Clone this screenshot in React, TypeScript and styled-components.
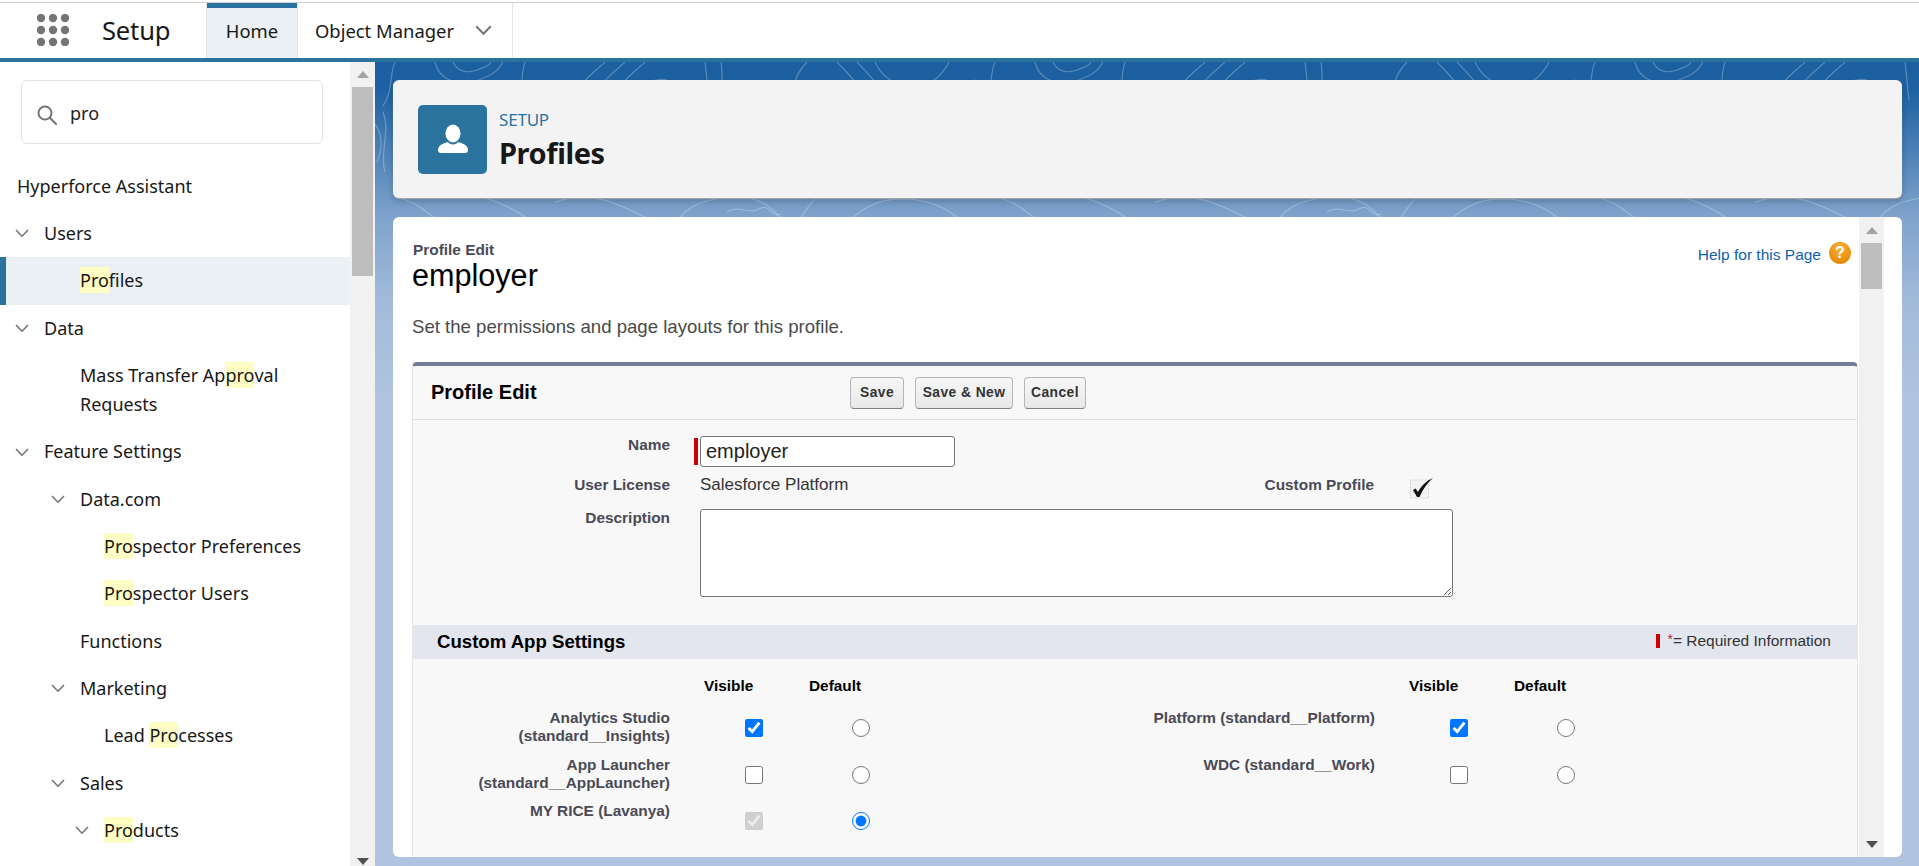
import React from "react";
import styled, { createGlobalStyle } from "styled-components";

const UI = `"Noto Sans", "Open Sans", sans-serif`;
const ARIAL = `"Liberation Sans", Arial, sans-serif`;
const BRAND = "#2a739e";

const Global = createGlobalStyle`
  html, body { margin: 0; padding: 0; height: 100%; overflow: hidden; background: #fff; }
  * { box-sizing: border-box; }
`;

const Page = styled.div`
  height: 100vh;
  display: flex;
  flex-direction: column;
  overflow: hidden;
  font-family: ${UI};
  color: #181818;
`;

const Header = styled.header`
  height: 62px;
  flex: none;
  padding-top: 2px;
  border-bottom: 4px solid ${BRAND};
  background: #fff;
`;
const HeaderInner = styled.div`
  height: 100%;
  border-top: 1px solid #cfcfcf;
  display: flex;
  align-items: stretch;
`;
const Launcher = styled.div`
  width: 102px;
  padding: 11px 0 0 37px;
  svg { display: block; }
`;
const AppName = styled.div`
  width: 104px;
  font-size: 25.6px;
  line-height: 55px;
  color: #181818;
  letter-spacing: -0.2px;
`;
const Tab = styled.div<{ $active?: boolean }>`
  display: flex;
  align-items: center;
  justify-content: ${(p) => (p.$active ? "center" : "flex-start")};
  gap: 21px;
  width: ${(p) => (p.$active ? "92px" : "215px")};
  padding-left: ${(p) => (p.$active ? "0" : "17px")};
  font-size: 18.4px;
  border-right: 1px solid #e4e4e4;
  border-left: ${(p) => (p.$active ? "1px solid #e4e4e4" : "none")};
  background: ${(p) => (p.$active ? "#eaf0f4" : "#fff")};
  box-shadow: ${(p) => (p.$active ? `inset 0 5px 0 ${BRAND}` : "none")};
`;

const Workspace = styled.div`
  flex: 1;
  min-height: 0;
  display: flex;
`;

const Sidebar = styled.aside`
  width: 375px;
  flex: none;
  display: flex;
  background: #fff;
`;
const SideMain = styled.div`
  width: 350px;
  flex: none;
  overflow: hidden;
`;
const SearchBox = styled.div`
  margin: 18px 0 0 21px;
  width: 302px;
  height: 64px;
  border: 1px solid #e5e5e5;
  border-radius: 6px;
  display: flex;
  align-items: center;
  gap: 13px;
  padding: 2px 0 0 15px;
  font-size: 18px;
  color: #222;
  svg { margin-top: 3px; }
`;
const NavList = styled.div`
  margin-top: 18.6px;
`;
const NavRow = styled.div<{ $pad: number; $active?: boolean }>`
  display: flex;
  align-items: center;
  min-height: 47.33px;
  padding: 9.16px 20px 9.16px ${(p) => p.$pad}px;
  font-size: 18px;
  line-height: 29px;
  color: #181818;
  background: ${(p) => (p.$active ? "#eaf0f4" : "transparent")};
  box-shadow: ${(p) => (p.$active ? `inset 6px 0 0 ${BRAND}` : "none")};
`;
const NavChevron = styled.span`
  width: 14px;
  flex: none;
  margin-right: 15px;
  display: flex;
`;
const Mark = styled.span`
  display: inline-block;
  line-height: 26px;
  vertical-align: top;
  margin-top: 1px;
  background: #fdfdc4;
`;

const Track = styled.div`
  width: 25px;
  flex: none;
  background: #f1f1f1;
  padding: 0 2px 0 2px;
  display: flex;
  flex-direction: column;
  align-items: stretch;
`;
const ArrowSlot = styled.div<{ $down?: boolean; $h: number }>`
  height: ${(p) => p.$h}px;
  flex: none;
  margin-top: ${(p) => (p.$down ? "auto" : "0")};
  display: flex;
  justify-content: center;
  align-items: center;
  svg { display: block; }
`;
const Thumb = styled.div<{ $h: number }>`
  height: ${(p) => p.$h}px;
  flex: none;
  background: #bdbdbd;
`;

const Main = styled.main`
  flex: 1;
  min-width: 0;
  position: relative;
  padding: 18px 17px 9px 18px;
  display: flex;
  flex-direction: column;
  gap: 19px;
  background: linear-gradient(180deg, #1c5fa1 0, #1f62a3 30px, #7fa3cc 155px, #a3bbda 240px, #b0c4df 340px, #b0c4df 100%);
`;
const Contours = styled.svg`
  position: absolute;
  inset: 0;
  width: 100%;
  height: 100%;
  pointer-events: none;
`;
const TitleCard = styled.section`
  position: relative;
  height: 118px;
  flex: none;
  border-radius: 6px;
  background: #f3f3f3;
  box-shadow: 0 1px 1px #a8a8a8, 0 3px 6px rgba(0, 0, 0, 0.22);
  display: flex;
  align-items: center;
  padding-left: 25px;
  gap: 12px;
`;
const TitleIcon = styled.div`
  width: 69px;
  height: 69px;
  border-radius: 5px;
  background: ${BRAND};
  display: flex;
  align-items: center;
  justify-content: center;
`;
const TitleText = styled.div`
  display: flex;
  flex-direction: column;
`;
const Eyebrow = styled.div`
  font-size: 17px;
  line-height: 24px;
  color: ${BRAND};
  letter-spacing: -0.2px;
`;
const BigTitle = styled.h1`
  margin: 4px 0 0;
  font-size: 29px;
  line-height: 34px;
  font-weight: 700;
  color: #181818;
  letter-spacing: -0.4px;
`;

const ContentCard = styled.section`
  position: relative;
  flex: 1;
  min-height: 0;
  border-radius: 6px;
  background: #fff;
  display: flex;
  padding-right: 18px;
  overflow: hidden;
`;
const Body = styled.div`
  flex: 1;
  min-width: 0;
  padding: 25px 1px 0 19px;
  overflow: hidden;
  font-family: ${ARIAL};
`;
const PageHead = styled.div`
  display: flex;
  justify-content: space-between;
  align-items: flex-start;
`;
const PageKicker = styled.div`
  padding-left: 1px;
  font-size: 15.4px;
  line-height: 16px;
  font-weight: 700;
  color: #4a4a56;
`;
const PageName = styled.h2`
  margin: 0;
  font-size: 30.6px;
  line-height: 34px;
  font-weight: 400;
  color: #000;
`;
const HelpLink = styled.a`
  display: flex;
  align-items: center;
  gap: 8px;
  margin: 0 7px 0 0;
  font-size: 15.5px;
  color: #0f62ae;
`;
const HelpText = styled.span`
  padding-top: 4px;
`;
const HelpBadge = styled.span`
  width: 22px;
  height: 22px;
  border-radius: 50%;
  background: radial-gradient(circle at 50% 30%, #f8b23e, #e58a08 75%);
  color: #fff;
  font-weight: 700;
  font-size: 16px;
  line-height: 22px;
  text-align: center;
`;
const Lead = styled.p`
  margin: 25px 0 0;
  font-size: 18.6px;
  line-height: 20px;
  color: #4a4a4a;
`;

const Panel = styled.div`
  margin-top: 25px;
  border: 1px solid #e4e6e8;
  border-top: 4px solid #747e96;
  border-radius: 5px 5px 0 0;
  background: #f8f8f8;
  height: 600px;
`;
const PanelHead = styled.div`
  height: 54px;
  border-bottom: 1px solid #dfe1e3;
  display: flex;
  align-items: center;
  padding-left: 18px;
`;
const PanelTitle = styled.h3`
  margin: 0;
  width: 419px;
  font-size: 20px;
  font-weight: 700;
  color: #000;
`;
const Buttons = styled.div`
  display: flex;
  gap: 11px;
`;
const Btn = styled.button<{ $w: number }>`
  width: ${(p) => p.$w}px;
  height: 32px;
  padding: 0;
  border: 1px solid #b5b5b5;
  border-bottom-color: #7f7f7f;
  border-radius: 4px;
  background: linear-gradient(180deg, #f7f7f7, #e8e8e9);
  font-family: ${ARIAL};
  font-size: 13.8px;
  font-weight: 700;
  letter-spacing: 0.45px;
  color: #333;
`;
const FormRow = styled.div<{ $mt: number }>`
  display: grid;
  grid-template-columns: 257px 1fr;
  column-gap: 30px;
  margin-top: ${(p) => p.$mt}px;
`;
const FieldLabel = styled.div<{ $pt?: number }>`
  text-align: right;
  font-size: 15.4px;
  line-height: 16px;
  font-weight: 700;
  color: #4a4a56;
  padding-top: ${(p) => p.$pt ?? 0}px;
`;
const FieldCell = styled.div`
  display: flex;
  align-items: flex-start;
  position: relative;
`;
const Required = styled.span`
  position: absolute;
  left: -6px;
  top: 2px;
  width: 4px;
  height: 27px;
  background: #c00;
`;
const NameInput = styled.input`
  width: 255px;
  height: 31px;
  border: 1px solid #767676;
  border-radius: 3px;
  background: #fff;
  padding: 0 5px;
  font-family: ${ARIAL};
  font-size: 20px;
  color: #222;
  outline: none;
`;
const ValueText = styled.div`
  width: 434px;
  font-size: 17px;
  line-height: 18px;
  color: #333;
`;
const InlineLabel = styled(FieldLabel)`
  width: 240px;
`;
const ReadonlyCheck = styled.svg`
  display: block;
  margin: 1px 0 0 36px;
`;
const Notes = styled.textarea`
  display: block;
  width: 753px;
  height: 88px;
  margin: 0;
  border: 1px solid #767676;
  border-radius: 3px;
  background: #fff;
  outline: none;
`;
const SectionBar = styled.div`
  margin-top: 28px;
  height: 34px;
  background: #e3e6ef;
  display: flex;
  align-items: center;
  justify-content: space-between;
  padding: 0 26px 0 24px;
`;
const SectionTitle = styled.h4`
  margin: 0;
  font-size: 18.6px;
  font-weight: 700;
  color: #000;
`;
const RequiredNote = styled.div`
  display: flex;
  align-items: center;
  font-size: 15.5px;
  line-height: 18px;
  color: #333;
  margin-top: -3px;
  i {
    display: block;
    width: 4px;
    height: 14px;
    background: #c00;
    margin-right: 7px;
  }
  b {
    font-weight: 400;
    color: #a33;
    font-size: 14px;
    line-height: 14px;
    align-self: flex-start;
  }
`;
const AppTable = styled.div`
  display: flex;
  padding-top: 18px;
`;
const AppHalf = styled.div`
  width: 705px;
  display: grid;
  grid-template-columns: 291px 105px 1fr;
  grid-auto-rows: 46.5px;
  grid-template-rows: 32px;
`;
const ColHead = styled.div`
  font-size: 15.4px;
  line-height: 18px;
  font-weight: 700;
  color: #000;
`;
const AppLabel = styled.div`
  padding-right: 34px;
  text-align: right;
  font-size: 15.4px;
  line-height: 18px;
  font-weight: 700;
  color: #4a4a56;
`;
const Cell = styled.div<{ $ml: number }>`
  padding: 10px 0 0 ${(p) => p.$ml}px;
  input {
    display: block;
    width: 18px;
    height: 18px;
    margin: 0;
  }
`;

const Chev = ({ size = 14 }: { size?: number }) => (
  <svg width={size} height={size * 0.6} viewBox="0 0 14 8.4" fill="none" stroke="#747474" strokeWidth="1.6">
    <polyline points="1,1 7,7.2 13,1" />
  </svg>
);

const ScrollBar = ({ h, upH, downH }: { h: number; upH: number; downH: number }) => (
  <Track>
    <ArrowSlot $h={upH}>
      <svg width="12" height="7"><polygon points="6,0 12,7 0,7" fill="#a3a3a3" /></svg>
    </ArrowSlot>
    <Thumb $h={h} />
    <ArrowSlot $down $h={downH}>
      <svg width="12" height="7"><polygon points="0,0 12,0 6,7" fill="#505050" /></svg>
    </ArrowSlot>
  </Track>
);

const Hl = ({ pre = "", hl, post = "" }: { pre?: string; hl: string; post?: string }) => (
  <span>
    {pre}
    <Mark>{hl}</Mark>
    {post}
  </span>
);

type Item = { pad: number; chev?: boolean; active?: boolean; node: React.ReactNode };
const items: Item[] = [
  { pad: 17, node: "Hyperforce Assistant" },
  { pad: 15, chev: true, node: "Users" },
  { pad: 80, active: true, node: <Hl hl="Pro" post="files" /> },
  { pad: 15, chev: true, node: "Data" },
  { pad: 80, node: <Hl pre="Mass Transfer Ap" hl="pro" post="val Requests" /> },
  { pad: 15, chev: true, node: "Feature Settings" },
  { pad: 51, chev: true, node: "Data.com" },
  { pad: 104, node: <Hl hl="Pro" post="spector Preferences" /> },
  { pad: 104, node: <Hl hl="Pro" post="spector Users" /> },
  { pad: 80, node: "Functions" },
  { pad: 51, chev: true, node: "Marketing" },
  { pad: 104, node: <Hl pre="Lead " hl="Pro" post="cesses" /> },
  { pad: 51, chev: true, node: "Sales" },
  { pad: 75, chev: true, node: <Hl hl="Pro" post="ducts" /> },
];

const leftApps = [
  { label: "Analytics Studio (standard__Insights)", vis: "on", def: false },
  { label: "App Launcher (standard__AppLauncher)", vis: "off", def: false },
  { label: "MY RICE (Lavanya)", vis: "locked", def: true },
];
const rightApps = [
  { label: "Platform (standard__Platform)", vis: "on", def: false },
  { label: "WDC (standard__Work)", vis: "off", def: false },
];

const AppColumn = ({ name, rows }: { name: string; rows: { label: string; vis: string; def: boolean }[] }) => (
  <AppHalf>
    <div />
    <ColHead>Visible</ColHead>
    <ColHead>Default</ColHead>
    {rows.map((r) => (
      <React.Fragment key={r.label}>
        <AppLabel>{r.label.includes("(") && r.label.length > 32 ? (
          <>
            {r.label.split(" (")[0]}
            <br />({r.label.split(" (")[1]}
          </>
        ) : (
          r.label
        )}</AppLabel>
        <Cell $ml={41}>
          <input type="checkbox" readOnly checked={r.vis !== "off"} disabled={r.vis === "locked"} />
        </Cell>
        <Cell $ml={43}>
          <input type="radio" name={name} readOnly checked={r.def} />
        </Cell>
      </React.Fragment>
    ))}
  </AppHalf>
);

const contourTile = [
  "M20 0c-6 14-2 30-12 44",
  "M60 0c4 18 24 26 44 18s20-12 24-18",
  "M78 0c4 9 14 12 24 8s12-4 14-8",
  "M150 0c-4 14-4 24 0 38",
  "M190 40c12-14 26-28 40-40",
  "M210 40c12-14 26-28 40-40",
  "M230 40c12-14 26-28 40-40",
  "M262 30c14-16 30-16 44-4s6 20 10 34",
  "M330 0c2 14 2 24 4 38",
  "M346 0c2 14 0 26 4 38",
  "M420 40c-4-16 2-30 12-40",
  "M462 0c14 14 24 28 36 38",
  "M482 0c14 14 24 28 36 38",
  "M500 0c10 22 40 34 62 16 6-6 10-12 12-16",
  "M590 38c8-12 12-26 16-38",
  "M20 135c30 6 40 26 60 36",
  "M70 136c34-10 70 10 96 30",
  "M180 140c40-14 70 6 100 20",
  "M300 165c6-16 20-26 52-30s50 14 60 30",
  "M352 150c14-8 20 4 34-4 8-4 10 10 20 6",
  "M440 136c-8 12-18 20-14 30",
  "M470 165c10-14 30-30 62-28s46 14 62 28",
  "M8 50c8 20-4 40 2 60",
  "M-2 60c10 10 10 26 4 40",
];

export default function App() {
  return (
    <Page>
      <Global />
      <Header>
        <HeaderInner>
          <Launcher>
            <svg width="32" height="32" viewBox="0 0 32 32" fill="#747474">
              {[4, 16, 28].flatMap((y) => [4, 16, 28].map((x) => <circle key={`${x}-${y}`} cx={x} cy={y} r="4.2" />))}
            </svg>
          </Launcher>
          <AppName>Setup</AppName>
          <Tab $active>Home</Tab>
          <Tab>
            Object Manager
            <Chev size={17} />
          </Tab>
        </HeaderInner>
      </Header>
      <Workspace>
        <Sidebar>
          <SideMain>
            <SearchBox>
              <svg width="20" height="20" viewBox="0 0 20 20" fill="none" stroke="#747474" strokeWidth="2">
                <circle cx="8" cy="8" r="6.5" />
                <line x1="12.8" y1="12.8" x2="19" y2="19" strokeLinecap="round" />
              </svg>
              pro
            </SearchBox>
            <NavList>
              {items.map((it, i) => (
                <NavRow key={i} $pad={it.pad} $active={it.active}>
                  {it.chev && (
                    <NavChevron>
                      <Chev />
                    </NavChevron>
                  )}
                  {it.node}
                </NavRow>
              ))}
            </NavList>
          </SideMain>
          <ScrollBar h={189} upH={25} downH={10} />
        </Sidebar>
        <Main>
          <Contours>
            <defs>
              <pattern id="topo" width="600" height="170" patternUnits="userSpaceOnUse" x="0" y="0">
                {contourTile.map((d, i) => (
                  <path key={i} d={d} fill="none" stroke="#ffffff" strokeOpacity="0.26" strokeWidth="1.2" />
                ))}
              </pattern>
            </defs>
            <rect width="100%" height="170" fill="url(#topo)" />
          </Contours>
          <TitleCard>
            <TitleIcon>
              <svg width="30" height="30" viewBox="0 0 30 30" fill="#fff">
                <ellipse cx="15" cy="9.5" rx="7.5" ry="9" />
                <path d="M0 26c0-5 6-7 10-8 1 1.500 3 2.500 5 2.500s4-1 5-2.500c4 1 10 3 10 8 0 2-1 3-3 3H3c-2 0-3-1-3-3z" />
              </svg>
            </TitleIcon>
            <TitleText>
              <Eyebrow>SETUP</Eyebrow>
              <BigTitle>Profiles</BigTitle>
            </TitleText>
          </TitleCard>
          <ContentCard>
            <Body>
              <PageHead>
                <div>
                  <PageKicker>Profile Edit</PageKicker>
                  <PageName>employer</PageName>
                </div>
                <HelpLink>
                  <HelpText>Help for this Page</HelpText>
                  <HelpBadge>?</HelpBadge>
                </HelpLink>
              </PageHead>
              <Lead>Set the permissions and page layouts for this profile.</Lead>
              <Panel>
                <PanelHead>
                  <PanelTitle>Profile Edit</PanelTitle>
                  <Buttons>
                    <Btn $w={54}>Save</Btn>
                    <Btn $w={98}>Save &amp; New</Btn>
                    <Btn $w={62}>Cancel</Btn>
                  </Buttons>
                </PanelHead>
                <FormRow $mt={16}>
                  <FieldLabel $pt={1}>Name</FieldLabel>
                  <FieldCell>
                    <Required />
                    <NameInput readOnly value="employer" />
                  </FieldCell>
                </FormRow>
                <FormRow $mt={9}>
                  <FieldLabel $pt={1}>User License</FieldLabel>
                  <FieldCell>
                    <ValueText>Salesforce Platform</ValueText>
                    <InlineLabel $pt={1}>Custom Profile</InlineLabel>
                    <ReadonlyCheck width="24" height="22" viewBox="0 0 24 22">
                      <rect x="0.5" y="3" width="18" height="18" fill="#f2f2f2" stroke="#c8c8c8" strokeDasharray="1 1" />
                      <path d="M3 13l2.500-1.500L8 15C11 9 16 4 23 1 17 6 13 12 9.500 20H7z" fill="#111" />
                    </ReadonlyCheck>
                  </FieldCell>
                </FormRow>
                <FormRow $mt={10}>
                  <FieldLabel $pt={1}>Description</FieldLabel>
                  <FieldCell>
                    <Notes readOnly />
                  </FieldCell>
                </FormRow>
                <SectionBar>
                  <SectionTitle>Custom App Settings</SectionTitle>
                  <RequiredNote>
                    <i />
                    <b>*</b>= Required Information
                  </RequiredNote>
                </SectionBar>
                <AppTable>
                  <AppColumn name="left" rows={leftApps} />
                  <AppColumn name="right" rows={rightApps} />
                </AppTable>
              </Panel>
            </Body>
            <ScrollBar h={46} upH={26} downH={26} />
          </ContentCard>
        </Main>
      </Workspace>
    </Page>
  );
}
